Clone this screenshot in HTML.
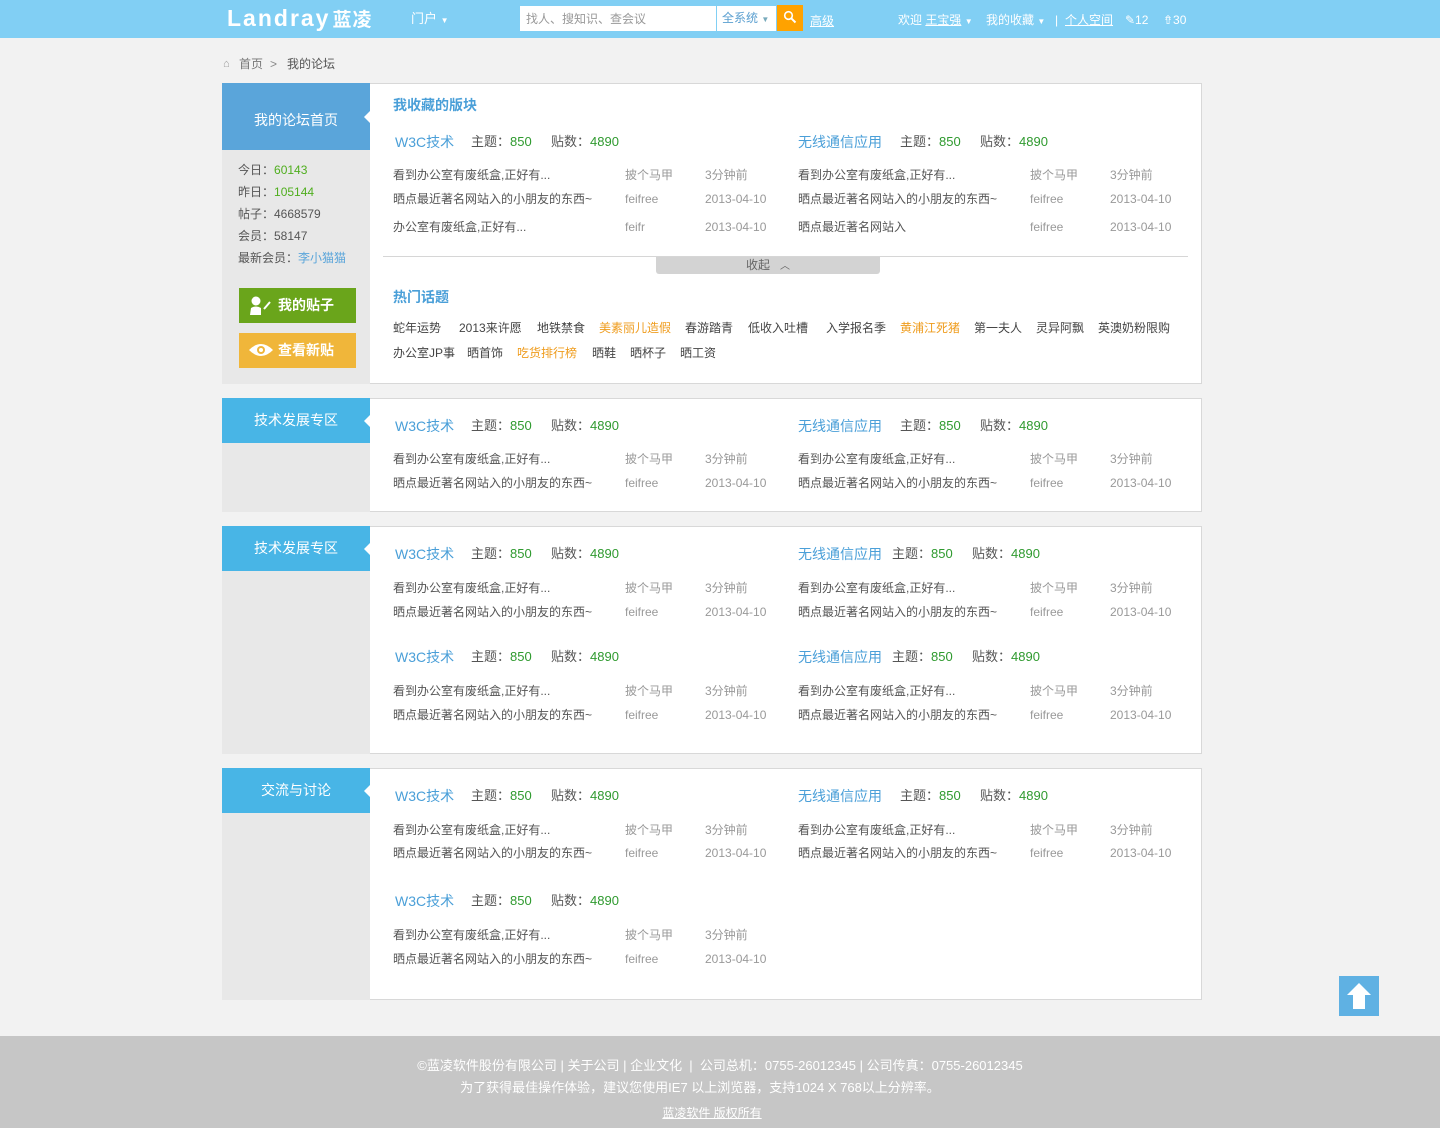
<!DOCTYPE html>
<html><head><meta charset="utf-8">
<style>
*{margin:0;padding:0;box-sizing:border-box}
body{width:1440px;height:1128px;background:#f2f2f2;font-family:"Liberation Sans","Noto Sans CJK SC",sans-serif;font-size:12px;color:#555;position:relative;overflow:hidden}
.abs{position:absolute;white-space:nowrap;line-height:16px}
#top{position:absolute;left:0;top:0;width:1440px;height:38px;background:#81cff4}
.side{position:absolute;left:222px;width:148px;background:#e8e8e8}
.sh{position:absolute;left:0;top:0;width:148px;background:#48b5e6;color:#fff;font-size:14px;text-align:center}
.sh:after{content:"";position:absolute;right:0;top:50%;margin-top:-6px;border:6px solid transparent;border-right-color:#fff;border-left:0;width:0;height:0}
.main{position:absolute;left:370px;width:832px;background:#fff;border:1px solid #d8d8d8;border-left:none}
.fb{position:absolute}
.fb .t{position:absolute;left:2px;top:0;font-size:14px;color:#4a9fd8;line-height:16px;white-space:nowrap}
.fb .s{position:absolute;top:0;font-size:13px;color:#555;line-height:16px;white-space:nowrap}
.g{color:#2f9a2f}
.r{position:absolute;left:0;width:400px;height:16px;line-height:16px;font-size:12px}
.r span{position:absolute;top:0;white-space:nowrap}
.r .a{left:0;color:#555}.r .u{left:232px;color:#999}.r .d{left:312px;color:#999}
.tag{position:absolute;white-space:nowrap;line-height:16px;color:#444}
.o{color:#ef9c1d}
</style></head><body>
<div id="top"></div>
<div class="abs" style="left:227px;top:5px;font-size:23px;line-height:26px;color:#fff;font-weight:bold;letter-spacing:2px">Landray<span style="font-size:19px;margin-left:2px;letter-spacing:1px">蓝凌</span></div>
<div class="abs" style="left:411px;top:11px;color:#fff;font-size:13px">门户 <span style="font-size:8px">▼</span></div>
<div style="position:absolute;left:520px;top:6px;width:196px;height:25px;background:#fff"></div>
<div class="abs" style="left:526px;top:11px;color:#999;font-size:12px">找人、搜知识、查会议</div>
<div style="position:absolute;left:717px;top:6px;width:59px;height:25px;background:#fff"></div>
<div class="abs" style="left:722px;top:10px;color:#5a9fd0;font-size:12px">全系统 <span style="font-size:8px;color:#7ab">▼</span></div>
<div style="position:absolute;left:777px;top:5px;width:26px;height:26px;background:#ffa200"></div>
<svg style="position:absolute;left:783px;top:10px" width="14" height="14"><circle cx="5.5" cy="5.5" r="3.8" stroke="#fff" stroke-width="1.6" fill="none"/><line x1="8.3" y1="8.3" x2="12.5" y2="12.5" stroke="#fff" stroke-width="2"/></svg>
<div class="abs" style="left:810px;top:13px;color:#fff;text-decoration:underline;font-size:12px">高级</div>
<div class="abs" style="left:898px;top:12px;color:#fff;font-size:12px">欢迎 <u>王宝强</u> <span style="font-size:8px">▼</span></div>
<div class="abs" style="left:986px;top:12px;color:#fff;font-size:12px">我的收藏 <span style="font-size:8px">▼</span></div>
<div class="abs" style="left:1055px;top:12px;color:#fff">|</div>
<div class="abs" style="left:1065px;top:12px;color:#fff;text-decoration:underline">个人空间</div>
<div class="abs" style="left:1125px;top:12px;color:#fff">✎12</div>
<div class="abs" style="left:1163px;top:12px;color:#fff">⇮30</div>

<div class="abs" style="left:223px;top:56px;color:#999;font-size:11px">⌂</div>
<div class="abs" style="left:239px;top:56px;color:#777">首页</div>
<div class="abs" style="left:270px;top:56px;color:#888">&gt;</div>
<div class="abs" style="left:287px;top:56px;color:#555">我的论坛</div>

<!-- Section 1 -->
<div class="side" style="top:83px;height:301px"></div>
<div class="sh" style="position:absolute;left:222px;top:83px;height:67px;line-height:74px;background:#5aa5da">我的论坛首页</div>
<div class="abs" style="left:238px;top:162px">今日：<span style="color:#4fae1e">60143</span></div>
<div class="abs" style="left:238px;top:184px">昨日：<span style="color:#4fae1e">105144</span></div>
<div class="abs" style="left:238px;top:206px">帖子：4668579</div>
<div class="abs" style="left:238px;top:228px">会员：58147</div>
<div class="abs" style="left:238px;top:250px">最新会员：<span style="color:#5aa5da">李小猫猫</span></div>
<div style="position:absolute;left:239px;top:288px;width:117px;height:35px;background:#6aa51b"></div>
<svg style="position:absolute;left:248px;top:296px" width="24" height="20"><circle cx="8" cy="5" r="4.5" fill="#fff"/><path d="M2 19 L3 12 Q8 9 13 12 L13 19 Z" fill="#fff"/><line x1="16" y1="13" x2="22" y2="6" stroke="#fff" stroke-width="2"/></svg>
<div class="abs" style="left:278px;top:297px;color:#fff;font-size:14px;font-weight:bold">我的贴子</div>
<div style="position:absolute;left:239px;top:333px;width:117px;height:35px;background:#f0b63a"></div>
<svg style="position:absolute;left:248px;top:342px" width="26" height="16"><path d="M1 8 Q13 -4 25 8 Q13 20 1 8 Z" fill="#fff"/><circle cx="13" cy="8" r="4" fill="#f0b63a"/><circle cx="13" cy="8" r="2" fill="#fff"/></svg>
<div class="abs" style="left:278px;top:342px;color:#fff;font-size:14px;font-weight:bold">查看新贴</div>

<div class="main" style="top:83px;height:301px"></div>
<div class="abs" style="left:393px;top:97px;font-size:14px;font-weight:bold;color:#4a9fd8">我收藏的版块</div>

<div class="fb" style="left:393px;top:134px">
<div class="t">W3C技术</div><div class="s" style="left:78px">主题：<span class="g">850</span></div><div class="s" style="left:158px">贴数：<span class="g">4890</span></div>
<div class="r" style="top:33px"><span class="a">看到办公室有废纸盒,正好有...</span><span class="u">披个马甲</span><span class="d">3分钟前</span></div>
<div class="r" style="top:57px"><span class="a">晒点最近著名网站入的小朋友的东西~</span><span class="u">feifree</span><span class="d">2013-04-10</span></div>
<div class="r" style="top:85px"><span class="a">办公室有废纸盒,正好有...</span><span class="u">feifr</span><span class="d">2013-04-10</span></div>
</div>
<div class="fb" style="left:798px;top:134px">
<div class="t" style="left:0">无线通信应用</div><div class="s" style="left:102px">主题：<span class="g">850</span></div><div class="s" style="left:182px">贴数：<span class="g">4890</span></div>
<div class="r" style="top:33px"><span class="a">看到办公室有废纸盒,正好有...</span><span class="u">披个马甲</span><span class="d">3分钟前</span></div>
<div class="r" style="top:57px"><span class="a">晒点最近著名网站入的小朋友的东西~</span><span class="u">feifree</span><span class="d">2013-04-10</span></div>
<div class="r" style="top:85px"><span class="a">晒点最近著名网站入</span><span class="u">feifree</span><span class="d">2013-04-10</span></div>
</div>
<div style="position:absolute;left:383px;top:256px;width:805px;height:1px;background:#d6d6d6"></div>
<div style="position:absolute;left:656px;top:257px;width:224px;height:17px;background:#d3d3d3;border-radius:0 0 3px 3px;text-align:center;line-height:16px;color:#666">收起 &nbsp;&nbsp;<span style="font-size:10px">︿</span></div>
<div class="abs" style="left:393px;top:289px;font-size:14px;font-weight:bold;color:#4a9fd8">热门话题</div>
<div class="tag" style="left:393px;top:320px">蛇年运势</div>
<div class="tag" style="left:459px;top:320px">2013来许愿</div>
<div class="tag" style="left:537px;top:320px">地铁禁食</div>
<div class="tag o" style="left:599px;top:320px">美素丽儿造假</div>
<div class="tag" style="left:685px;top:320px">春游踏青</div>
<div class="tag" style="left:748px;top:320px">低收入吐槽</div>
<div class="tag" style="left:826px;top:320px">入学报名季</div>
<div class="tag o" style="left:900px;top:320px">黄浦江死猪</div>
<div class="tag" style="left:974px;top:320px">第一夫人</div>
<div class="tag" style="left:1036px;top:320px">灵异阿飘</div>
<div class="tag" style="left:1098px;top:320px">英澳奶粉限购</div>
<div class="tag" style="left:393px;top:345px">办公室JP事</div>
<div class="tag" style="left:467px;top:345px">晒首饰</div>
<div class="tag o" style="left:517px;top:345px">吃货排行榜</div>
<div class="tag" style="left:592px;top:345px">晒鞋</div>
<div class="tag" style="left:630px;top:345px">晒杯子</div>
<div class="tag" style="left:680px;top:345px">晒工资</div>

<!-- Section 2 -->
<div class="side" style="top:398px;height:114px"></div>
<div class="sh" style="left:222px;top:398px;height:45px;line-height:45px;position:absolute">技术发展专区</div>
<div class="main" style="top:398px;height:114px"></div>
<div class="fb" style="left:393px;top:418px">
<div class="t">W3C技术</div><div class="s" style="left:78px">主题：<span class="g">850</span></div><div class="s" style="left:158px">贴数：<span class="g">4890</span></div>
<div class="r" style="top:33px"><span class="a">看到办公室有废纸盒,正好有...</span><span class="u">披个马甲</span><span class="d">3分钟前</span></div>
<div class="r" style="top:57px"><span class="a">晒点最近著名网站入的小朋友的东西~</span><span class="u">feifree</span><span class="d">2013-04-10</span></div>
</div>
<div class="fb" style="left:798px;top:418px">
<div class="t" style="left:0">无线通信应用</div><div class="s" style="left:102px">主题：<span class="g">850</span></div><div class="s" style="left:182px">贴数：<span class="g">4890</span></div>
<div class="r" style="top:33px"><span class="a">看到办公室有废纸盒,正好有...</span><span class="u">披个马甲</span><span class="d">3分钟前</span></div>
<div class="r" style="top:57px"><span class="a">晒点最近著名网站入的小朋友的东西~</span><span class="u">feifree</span><span class="d">2013-04-10</span></div>
</div>

<!-- Section 3 -->
<div class="side" style="top:526px;height:228px"></div>
<div class="sh" style="left:222px;top:526px;height:45px;line-height:45px;position:absolute">技术发展专区</div>
<div class="main" style="top:526px;height:228px"></div>
<div class="fb" style="left:393px;top:546px">
<div class="t">W3C技术</div><div class="s" style="left:78px">主题：<span class="g">850</span></div><div class="s" style="left:158px">贴数：<span class="g">4890</span></div>
<div class="r" style="top:34px"><span class="a">看到办公室有废纸盒,正好有...</span><span class="u">披个马甲</span><span class="d">3分钟前</span></div>
<div class="r" style="top:58px"><span class="a">晒点最近著名网站入的小朋友的东西~</span><span class="u">feifree</span><span class="d">2013-04-10</span></div>
</div>
<div class="fb" style="left:798px;top:546px">
<div class="t" style="left:0">无线通信应用</div><div class="s" style="left:94px">主题：<span class="g">850</span></div><div class="s" style="left:174px">贴数：<span class="g">4890</span></div>
<div class="r" style="top:34px"><span class="a">看到办公室有废纸盒,正好有...</span><span class="u">披个马甲</span><span class="d">3分钟前</span></div>
<div class="r" style="top:58px"><span class="a">晒点最近著名网站入的小朋友的东西~</span><span class="u">feifree</span><span class="d">2013-04-10</span></div>
</div>
<div class="fb" style="left:393px;top:649px">
<div class="t">W3C技术</div><div class="s" style="left:78px">主题：<span class="g">850</span></div><div class="s" style="left:158px">贴数：<span class="g">4890</span></div>
<div class="r" style="top:34px"><span class="a">看到办公室有废纸盒,正好有...</span><span class="u">披个马甲</span><span class="d">3分钟前</span></div>
<div class="r" style="top:58px"><span class="a">晒点最近著名网站入的小朋友的东西~</span><span class="u">feifree</span><span class="d">2013-04-10</span></div>
</div>
<div class="fb" style="left:798px;top:649px">
<div class="t" style="left:0">无线通信应用</div><div class="s" style="left:94px">主题：<span class="g">850</span></div><div class="s" style="left:174px">贴数：<span class="g">4890</span></div>
<div class="r" style="top:34px"><span class="a">看到办公室有废纸盒,正好有...</span><span class="u">披个马甲</span><span class="d">3分钟前</span></div>
<div class="r" style="top:58px"><span class="a">晒点最近著名网站入的小朋友的东西~</span><span class="u">feifree</span><span class="d">2013-04-10</span></div>
</div>

<!-- Section 4 -->
<div class="side" style="top:768px;height:232px"></div>
<div class="sh" style="left:222px;top:768px;height:45px;line-height:45px;position:absolute">交流与讨论</div>
<div class="main" style="top:768px;height:232px"></div>
<div class="fb" style="left:393px;top:788px">
<div class="t">W3C技术</div><div class="s" style="left:78px">主题：<span class="g">850</span></div><div class="s" style="left:158px">贴数：<span class="g">4890</span></div>
<div class="r" style="top:34px"><span class="a">看到办公室有废纸盒,正好有...</span><span class="u">披个马甲</span><span class="d">3分钟前</span></div>
<div class="r" style="top:57px"><span class="a">晒点最近著名网站入的小朋友的东西~</span><span class="u">feifree</span><span class="d">2013-04-10</span></div>
</div>
<div class="fb" style="left:798px;top:788px">
<div class="t" style="left:0">无线通信应用</div><div class="s" style="left:102px">主题：<span class="g">850</span></div><div class="s" style="left:182px">贴数：<span class="g">4890</span></div>
<div class="r" style="top:34px"><span class="a">看到办公室有废纸盒,正好有...</span><span class="u">披个马甲</span><span class="d">3分钟前</span></div>
<div class="r" style="top:57px"><span class="a">晒点最近著名网站入的小朋友的东西~</span><span class="u">feifree</span><span class="d">2013-04-10</span></div>
</div>
<div class="fb" style="left:393px;top:893px">
<div class="t">W3C技术</div><div class="s" style="left:78px">主题：<span class="g">850</span></div><div class="s" style="left:158px">贴数：<span class="g">4890</span></div>
<div class="r" style="top:34px"><span class="a">看到办公室有废纸盒,正好有...</span><span class="u">披个马甲</span><span class="d">3分钟前</span></div>
<div class="r" style="top:58px"><span class="a">晒点最近著名网站入的小朋友的东西~</span><span class="u">feifree</span><span class="d">2013-04-10</span></div>
</div>

<!-- back to top -->
<div style="position:absolute;left:1339px;top:976px;width:40px;height:40px;background:#5fb1e3"></div>
<svg style="position:absolute;left:1339px;top:976px" width="40" height="40"><path d="M8 19 L20 7 L32 19 L26 19 L26 33 L14 33 L14 19 Z" fill="#fff"/></svg>

<!-- footer -->
<div style="position:absolute;left:0;top:1036px;width:1440px;height:92px;background:#c6c6c6"></div>
<div class="abs" style="left:0;width:1440px;top:1058px;text-align:center;color:#fff;font-size:13px">©蓝凌软件股份有限公司 | 关于公司 | 企业文化 &nbsp;| &nbsp;公司总机：0755-26012345 | 公司传真：0755-26012345</div>
<div class="abs" style="left:0;width:1400px;top:1080px;text-align:center;color:#fff;font-size:13px">为了获得最佳操作体验，建议您使用IE7 以上浏览器，支持1024 X 768以上分辨率。</div>
<div class="abs" style="left:0;width:1424px;top:1105px;text-align:center;color:#fff;font-size:12px;text-decoration:underline">蓝凌软件 版权所有</div>
</body></html>
